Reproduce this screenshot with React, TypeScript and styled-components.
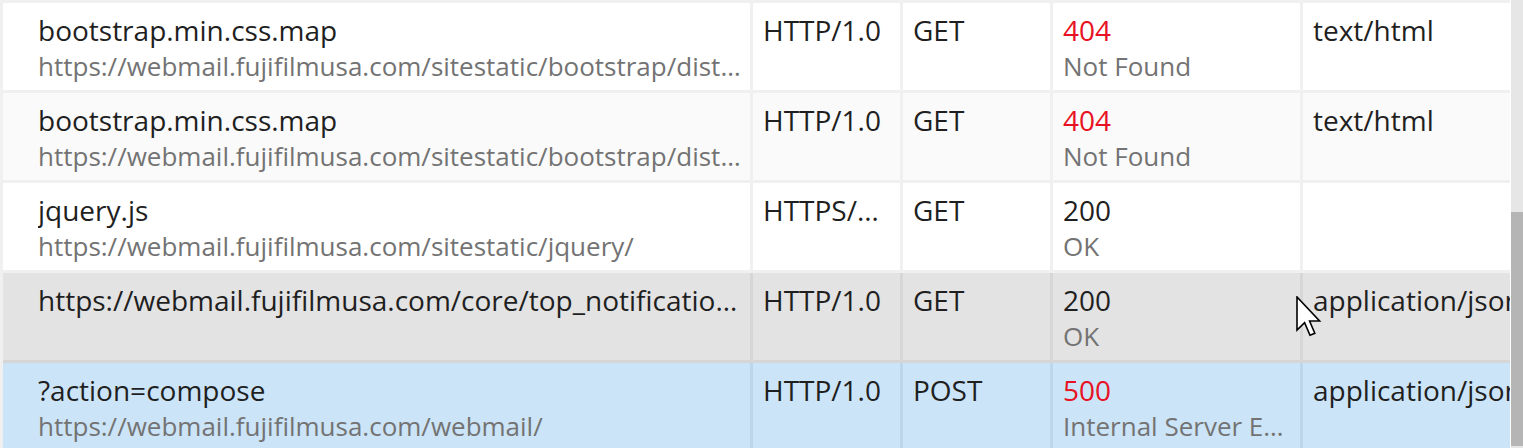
import React from "react";
import styled, { createGlobalStyle, css } from "styled-components";

const GlobalStyle = createGlobalStyle`
  html, body {
    margin: 0;
    padding: 0;
    background: #ffffff;
  }
  body {
    font-family: "Open Sans", "Noto Sans", "Liberation Sans", sans-serif;
  }
`;

type RowState = "normal" | "alt" | "hover" | "selected";

const rowColors: Record<RowState, { bg: string; line: string }> = {
  normal: { bg: "#ffffff", line: "#f0f0f0" },
  alt: { bg: "#fafafa", line: "#f0f0f0" },
  hover: { bg: "#e3e3e3", line: "#d6d6d6" },
  selected: { bg: "#cce4f7", line: "#bed6ea" },
};

const Screen = styled.div`
  display: flex;
  width: 1523px;
  height: 448px;
  overflow: hidden;
  position: relative;
`;

const Viewport = styled.div`
  width: 1510px;
  height: 448px;
  overflow: hidden;
  box-sizing: border-box;
  padding: 3px 0 0 3px;
  background: #f0f0f0;
`;

const Row = styled.div<{ $state: RowState }>`
  display: grid;
  grid-template-columns: 750px 150px 150px 250px 260px;
  height: 90px;
  box-sizing: border-box;
  background: ${(p) => rowColors[p.$state].bg};
  border-bottom: 3px solid ${(p) => rowColors[p.$state].line};
  color: #1f1f1f;
`;

const Cell = styled.div<{ $state: RowState; $first?: boolean }>`
  box-sizing: border-box;
  min-width: 0;
  padding: 9px 8px 0 10px;
  border-right: 3px solid ${(p) => rowColors[p.$state].line};
  line-height: 36px;
  ${(p) =>
    p.$first &&
    css`
      padding-left: 35px;
    `}
`;

const Line = styled.div<{ $muted?: boolean; $error?: boolean }>`
  white-space: nowrap;
  overflow: hidden;
  text-overflow: ellipsis;
  font-size: ${(p) => (p.$muted ? "26px" : "28px")};
  color: ${(p) => (p.$error ? "#e81123" : p.$muted ? "#737373" : "#1f1f1f")};
`;

const Scrollbar = styled.div`
  width: 12px;
  margin-left: 1px;
  height: 448px;
  display: flex;
  flex-direction: column;
  background: #e6e6e6;
`;

const Thumb = styled.div`
  margin-top: 212px;
  height: 234px;
  background: #b5b5b5;
`;

const Pointer = styled.svg`
  position: absolute;
  left: 1296px;
  top: 296px;
  pointer-events: none;
`;

type Request = {
  name: string;
  url?: string;
  protocol: string;
  method: string;
  status: string;
  statusText: string;
  type: string;
  state: RowState;
};

const requests: Request[] = [
  {
    name: "bootstrap.min.css.map",
    url: "https://webmail.fujifilmusa.com/sitestatic/bootstrap/dist/css/bootstrap.min.css.map",
    protocol: "HTTP/1.0",
    method: "GET",
    status: "404",
    statusText: "Not Found",
    type: "text/html",
    state: "normal",
  },
  {
    name: "bootstrap.min.css.map",
    url: "https://webmail.fujifilmusa.com/sitestatic/bootstrap/dist/css/bootstrap.min.css.map",
    protocol: "HTTP/1.0",
    method: "GET",
    status: "404",
    statusText: "Not Found",
    type: "text/html",
    state: "alt",
  },
  {
    name: "jquery.js",
    url: "https://webmail.fujifilmusa.com/sitestatic/jquery/",
    protocol: "HTTPS/1.1",
    method: "GET",
    status: "200",
    statusText: "OK",
    type: "",
    state: "normal",
  },
  {
    name: "https://webmail.fujifilmusa.com/core/top_notifications/",
    protocol: "HTTP/1.0",
    method: "GET",
    status: "200",
    statusText: "OK",
    type: "application/json",
    state: "hover",
  },
  {
    name: "?action=compose",
    url: "https://webmail.fujifilmusa.com/webmail/",
    protocol: "HTTP/1.0",
    method: "POST",
    status: "500",
    statusText: "Internal Server Error",
    type: "application/json",
    state: "selected",
  },
];

const App = () => (
  <Screen>
    <GlobalStyle />
    <Viewport>
      {requests.map((r, i) => (
        <Row key={i} $state={r.state}>
          <Cell $state={r.state} $first>
            <Line>{r.name}</Line>
            {r.url && <Line $muted>{r.url}</Line>}
          </Cell>
          <Cell $state={r.state}>
            <Line>{r.protocol}</Line>
          </Cell>
          <Cell $state={r.state}>
            <Line>{r.method}</Line>
          </Cell>
          <Cell $state={r.state}>
            <Line $error={r.status !== "200"}>{r.status}</Line>
            <Line $muted>{r.statusText}</Line>
          </Cell>
          <Cell $state={r.state}>
            <Line>{r.type}</Line>
          </Cell>
        </Row>
      ))}
    </Viewport>
    <Scrollbar>
      <Thumb />
    </Scrollbar>
    <Pointer width="26" height="42" viewBox="0 0 13 21">
      <polygon
        points="0.5,0.5 0.5,17 4.3,13.3 7,19.6 9.4,18.6 6.8,12.5 11.8,12.5"
        fill="#ffffff"
        stroke="#000000"
        strokeWidth="0.8"
        strokeLinejoin="miter"
      />
    </Pointer>
  </Screen>
);

export default App;
